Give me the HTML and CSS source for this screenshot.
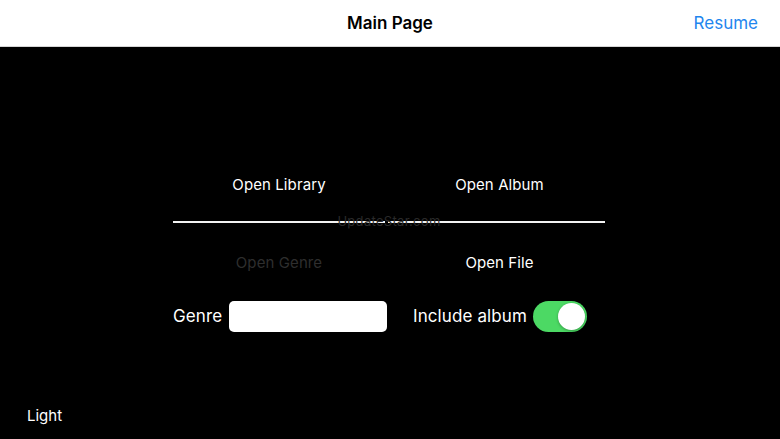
FILE: index.html
```html
<!DOCTYPE html>
<html>
<head>
<meta charset="utf-8">
<link rel="stylesheet" href="styles.css">
</head>
<body>
<div class="app">
  <header class="navbar">
    <div class="nav-title">Main Page</div>
    <div class="nav-action">Resume</div>
  </header>
  <main class="content">
    <div class="panel">
      <div class="grid">
        <div class="cell btn">Open Library</div>
        <div class="cell btn col2">Open Album</div>
        <div class="rule"></div>
        <div class="rule"></div>
        <div class="cell btn disabled">Open Genre</div>
        <div class="cell btn col2">Open File</div>
        <div class="ctrl left">
          <span class="label">Genre</span>
          <div class="input"></div>
        </div>
        <div class="ctrl right">
          <span class="label">Include album</span>
          <div class="toggle"><div class="knob"></div></div>
        </div>
        <div class="watermark">UpdateStar.com</div>
      </div>
    </div>
    <footer class="footer">Light</footer>
  </main>
</div>
</body>
</html>
```
FILE: styles.css
```css
* { box-sizing: border-box; }
html, body { margin: 0; padding: 0; }
body {
  width: 780px;
  height: 439px;
  overflow: hidden;
  font-family: Inter, "Noto Sans", sans-serif;
  background: #000;
}
.app { display: flex; flex-direction: column; height: 439px; }
.navbar {
  height: 47px;
  background: #fff;
  border-bottom: 1px solid #d6d6d6;
  display: flex;
  align-items: center;
  justify-content: center;
  position: relative;
  flex: none;
}
.nav-title { font-size: 17px; font-weight: 600; color: #000; letter-spacing: 0; }
.nav-action {
  position: absolute;
  right: 22px;
  top: 0;
  height: 46px;
  display: flex;
  align-items: center;
  font-size: 17px;
  color: #1f86ee;
}
.content { flex: 1; display: flex; flex-direction: column; }
.panel { flex: 1; padding-top: 117px; }
.grid {
  margin-left: 173px;
  width: 432px;
  display: grid;
  grid-template-columns: 212px 217px;
  column-gap: 3px;
  position: relative;
}
.btn {
  height: 40px;
  display: flex;
  align-items: center;
  justify-content: center;
  font-size: 15px;
  color: #fff;
  letter-spacing: 0.1px;
}
.btn.col2 { padding-left: 6px; }
.btn.disabled { color: #2e2e2e; }
.rule { height: 2px; background: #f2f2f2; margin-top: 17px; margin-bottom: 19px; }
.ctrl { display: flex; align-items: center; height: 32px; margin-top: 18px; }
.ctrl.left { gap: 7px; }
.ctrl.right { justify-content: flex-start; gap: 6px; padding-left: 25px; }
.label { font-size: 17px; color: #fff; letter-spacing: 0.1px; }
.input {
  width: 158px;
  height: 31px;
  background: #fff;
  border-radius: 5px;
  margin-right: -2px;
}
.toggle {
  width: 54px;
  height: 31px;
  border-radius: 16px;
  background: #4cd964;
  display: flex;
  align-items: center;
  justify-content: flex-end;
  padding-right: 2px;
}
.knob {
  width: 27px;
  height: 27px;
  border-radius: 50%;
  background: #fff;
  box-shadow: 0 1px 3px rgba(0,0,0,0.3);
}
.watermark {
  position: absolute;
  left: 0;
  right: 0;
  top: 49px;
  text-align: center;
  font-size: 13px;
  color: #2a2a2a;
  letter-spacing: 0.3px;
  pointer-events: none;
}
.footer {
  height: 48px;
  display: flex;
  align-items: center;
  padding-left: 27px;
  font-size: 15px;
  color: #fff;
  flex: none;
}
```
